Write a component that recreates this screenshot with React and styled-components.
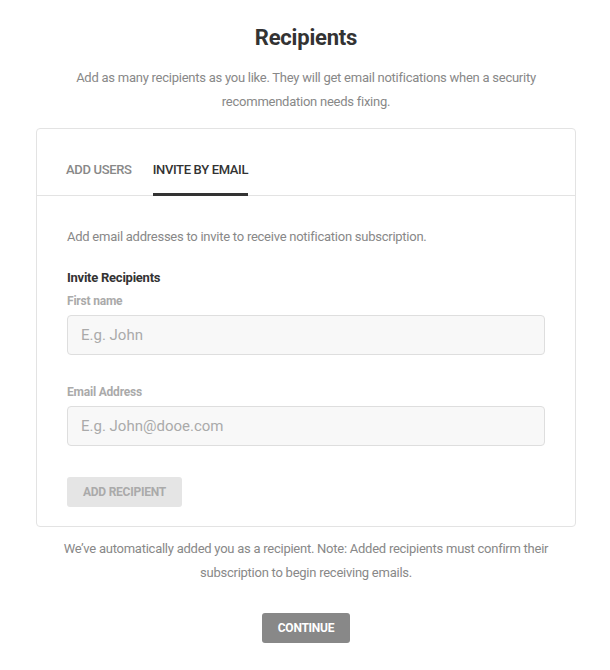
import React, { useState } from "react";
import styled, { createGlobalStyle } from "styled-components";

const Global = createGlobalStyle`
  html, body { margin: 0; padding: 0; background: #fff; }
  body { font-family: Roboto, "Liberation Sans", Arial, sans-serif; -webkit-font-smoothing: antialiased; }
  * { box-sizing: border-box; }
`;

const Page = styled.div`
  width: 540px;
  margin: 0 34px 0 36px;
  padding-top: 23px;
  display: flex;
  flex-direction: column;
  align-items: stretch;
`;

const Title = styled.h1`
  margin: 0;
  font-size: 22px;
  line-height: 30px;
  font-weight: 700;
  letter-spacing: -0.2px;
  color: #333;
  text-align: center;
`;

const Lead = styled.p`
  margin: ${(p) => p.$margin || "0"};
  font-size: 13px;
  line-height: 24px;
  letter-spacing: -0.25px;
  color: #888;
  text-align: center;
`;

const Card = styled.div`
  border: 1px solid #e3e3e3;
  border-radius: 4px;
  background: #fff;
`;

const TabBar = styled.div`
  display: flex;
  gap: 21px;
  padding: 0 29px;
  border-bottom: 1px solid #e3e3e3;
`;

const Tab = styled.button`
  all: unset;
  cursor: pointer;
  padding: 33px 0 15px;
  font-family: Roboto, "Liberation Sans", Arial, sans-serif;
  font-size: 13px;
  line-height: 16px;
  font-weight: 500;
  letter-spacing: -0.33px;
  text-transform: uppercase;
  color: ${(p) => (p.$active ? "#333" : "#888")};
  border-bottom: 3px solid ${(p) => (p.$active ? "#333" : "transparent")};
  margin-bottom: -1px;
`;

const Body = styled.div`
  padding: 31px 30px 19px;
  display: flex;
  flex-direction: column;
`;

const Hint = styled.p`
  margin: 0;
  font-size: 13px;
  line-height: 20px;
  letter-spacing: -0.25px;
  color: #888;
`;

const SectionTitle = styled.h3`
  margin: 21px 0 0;
  font-size: 13px;
  line-height: 20px;
  font-weight: 700;
  letter-spacing: -0.25px;
  color: #333;
`;

const Label = styled.label`
  display: block;
  margin: ${(p) => p.$top || "5px"} 0 6px;
  font-size: 12px;
  line-height: 16px;
  font-weight: 700;
  letter-spacing: -0.2px;
  color: #aaa;
`;

const Input = styled.input`
  width: 100%;
  height: 40px;
  padding: 0 13px;
  border: 1px solid #dedede;
  border-radius: 4px;
  background: #f8f8f8;
  font-family: Roboto, "Liberation Sans", Arial, sans-serif;
  font-size: 15px;
  color: #333;
  outline: none;
  &::placeholder { color: #aaa; }
`;

const Button = styled.button`
  height: 30px;
  padding: 0 ${(p) => p.$px || "16px"};
  border: none;
  border-radius: 3px;
  background: ${(p) => p.$bg};
  color: ${(p) => p.$fg};
  font-family: Roboto, "Liberation Sans", Arial, sans-serif;
  font-size: 12px;
  font-weight: 700;
  letter-spacing: -0.25px;
  text-transform: uppercase;
  cursor: pointer;
`;

const Actions = styled.div`
  display: flex;
  justify-content: ${(p) => (p.$center ? "center" : "flex-start")};
  margin-top: ${(p) => p.$top};
`;

export default function App() {
  const [tab, setTab] = useState("email");
  return (
    <>
      <Global />
      <Page>
        <Title>Recipients</Title>
        <Lead $margin="13px 0 14px">
          Add as many recipients as you like. They will get email notifications when a security recommendation needs fixing.
        </Lead>
        <Card>
          <TabBar>
            <Tab $active={tab === "users"} onClick={() => setTab("users")}>Add users</Tab>
            <Tab $active={tab === "email"} onClick={() => setTab("email")}>Invite by email</Tab>
          </TabBar>
          <Body>
            <Hint>Add email addresses to invite to receive notification subscription.</Hint>
            <SectionTitle>Invite Recipients</SectionTitle>
            <Label htmlFor="fn">First name</Label>
            <Input id="fn" placeholder="E.g. John" />
            <Label htmlFor="em" $top="29px">Email Address</Label>
            <Input id="em" placeholder="E.g. John@dooe.com" />
            <Actions $top="31px">
              <Button $bg="#e5e5e5" $fg="#aaa">Add recipient</Button>
            </Actions>
          </Body>
        </Card>
        <Lead $margin="10px 0 0">
          We’ve automatically added you as a recipient. Note: Added recipients must confirm their subscription to begin receiving emails.
        </Lead>
        <Actions $center $top="28px">
          <Button $bg="#888" $fg="#fff">Continue</Button>
        </Actions>
      </Page>
    </>
  );
}
